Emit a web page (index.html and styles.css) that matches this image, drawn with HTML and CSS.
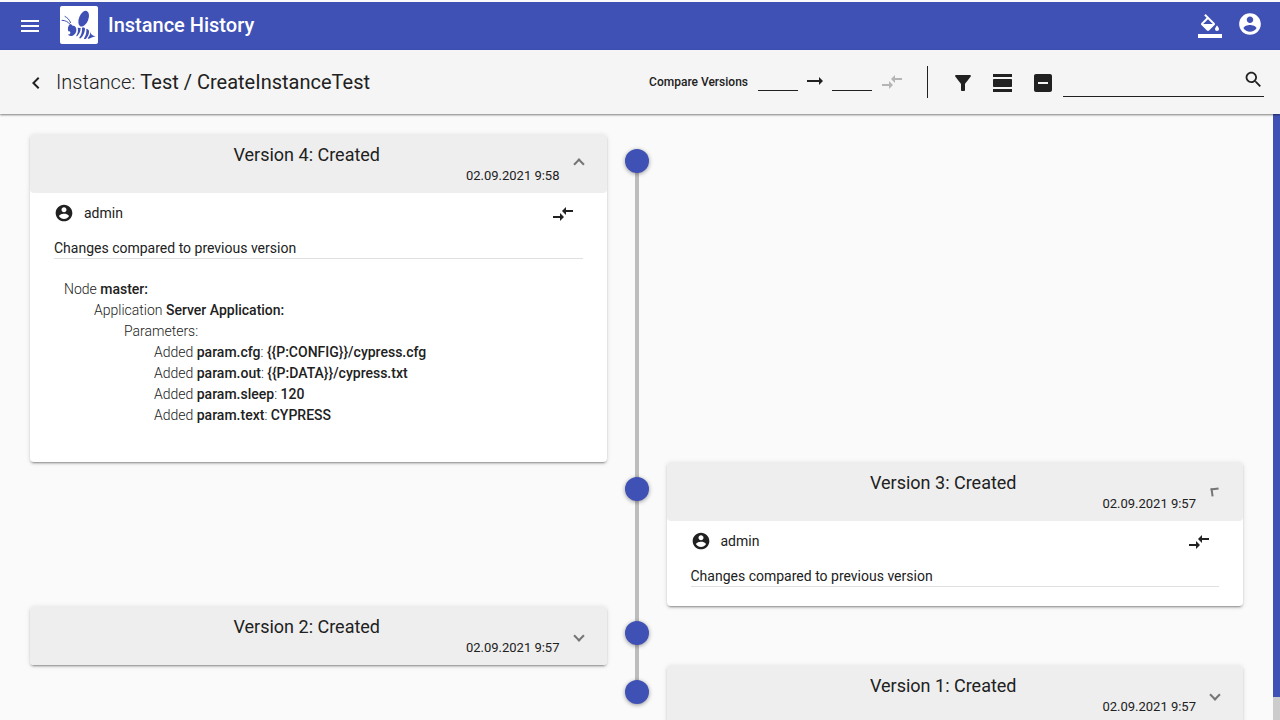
FILE: index.html
```html
<!DOCTYPE html>
<html lang="en">
<head>
<meta charset="utf-8">
<title>Instance History</title>
<link rel="stylesheet" href="styles.css">
</head>
<body>
<svg class="defs" aria-hidden="true">
  <symbol id="account" viewBox="0 0 24 24"><path d="M12 2C6.48 2 2 6.48 2 12s4.48 10 10 10 10-4.48 10-10S17.52 2 12 2zm0 3c1.66 0 3 1.34 3 3s-1.34 3-3 3-3-1.34-3-3 1.34-3 3-3zm0 14.2c-2.5 0-4.71-1.28-6-3.22.03-1.99 4-3.08 6-3.08 1.99 0 5.97 1.09 6 3.08-1.29 1.94-3.5 3.22-6 3.22z"/></symbol>
  <symbol id="compare" viewBox="0 0 24 24"><path d="M9.01 14H2v2h7.01v3L13 15l-3.99-4v3zm5.98-1v-3H22V8h-7.01V5L11 9l3.99 4z"/></symbol>
</svg>

<header class="app-bar">
  <button class="icon-button" aria-label="Menu"><svg class="icon" viewBox="0 0 24 24"><path d="M3 18h18v-2H3v2zm0-5h18v-2H3v2zm0-7v2h18V6H3z"/></svg></button>
  <svg class="logo" viewBox="0 0 114 114" role="img" aria-label="Bee logo">
    <rect class="logo-back" width="114" height="114" rx="6"/>
    <ellipse cx="71" cy="38" rx="14" ry="25" transform="rotate(22 71 38)"/>
    <path d="M30 55c4-1 7 2 8 5 5-2 10 3 11 9 1 9-3 17-11 20-6 2-13 1-14-4 3 1 7-1 7-5 0-3-3-5-6-4-3-7-1-17 5-21z"/>
    <path d="M53 65l9 1c0 9-4 18-10 24-3 2-4 0-2-3 4-7 5-15 3-22z"/>
    <path d="M66 65c5-1 9 0 9 4-1 11-5 21-12 27-3 3-7 1-4-3 5-7 8-17 7-28z"/>
    <path d="M79 68c6 1 9 5 8 11-1 8-4 14-9 19-4 2-8 1-5-3 5-7 7-17 6-27z"/>
    <path d="M91 77c1 8 6 12 16 14-7 1-13 5-20 7-3 0-5-1-3-3 4-5 7-10 7-18z"/>
    <path class="feeler" d="M5 43c11 0 19 4 26 13M14 31c8 4 14 9 18 20"/>
  </svg>
  <h1 class="app-title">Instance History</h1>
  <div class="app-actions">
    <button class="icon-button" aria-label="Theme"><svg class="icon" viewBox="0 0 24 24"><path d="M16.56 8.94L7.62 0 6.21 1.41l2.38 2.38-5.15 5.15c-.59.59-.59 1.54 0 2.12l5.5 5.5c.29.29.68.44 1.06.44s.77-.15 1.06-.44l5.5-5.5c.59-.58.59-1.53 0-2.12zM5.21 10L10 5.21 14.79 10H5.21zM19 11.5s-2 2.17-2 3.5c0 1.1.9 2 2 2s2-.9 2-2c0-1.33-2-3.5-2-3.5zM0 20h24v4H0z"/></svg></button>
    <button class="icon-button account-button" aria-label="Account"><svg class="icon icon-large"><use href="#account"/></svg></button>
  </div>
</header>

<div class="toolbar">
  <button class="icon-button" aria-label="Back"><svg class="icon" viewBox="0 0 24 24"><path d="M15.41 7.41L14 6l-6 6 6 6 1.41-1.41L10.83 12z"/></svg></button>
  <h2 class="page-title">Instance: <span class="page-name">Test / CreateInstanceTest</span></h2>
  <div class="compare-form">
    <span class="compare-label" id="compare-label">Compare Versions</span>
    <input class="version-input" type="text" aria-labelledby="compare-label">
    <svg class="icon" viewBox="0 0 24 24"><path d="M16.01 11H4v2h12.01v3L20 12l-3.99-4z"/></svg>
    <input class="version-input" type="text" aria-labelledby="compare-label">
    <button class="icon-button compare-button" aria-label="Compare" disabled><svg class="icon"><use href="#compare"/></svg></button>
  </div>
  <div class="tools">
    <button class="icon-button" aria-label="Filter"><svg class="icon" viewBox="0 0 24 24"><path d="M4.25 5.61C6.27 8.2 10 13 10 13v6c0 .55.45 1 1 1h2c.55 0 1-.45 1-1v-6s3.72-4.8 5.74-7.39C20.25 4.95 19.78 4 18.95 4H5.04c-.83 0-1.3.95-.79 1.61z"/></svg></button>
    <button class="icon-button" aria-label="Expand all"><svg class="icon" viewBox="0 0 24 24"><path d="M2 21h19v-3H2v3zM20 8H3c-.55 0-1 .45-1 1v6c0 .55.45 1 1 1h17c.55 0 1-.45 1-1V9c0-.55-.45-1-1-1zM2 3v3h19V3H2z"/></svg></button>
    <button class="icon-button" aria-label="Collapse all"><svg class="icon" viewBox="0 0 24 24"><path d="M19 3H5c-1.1 0-2 .9-2 2v14c0 1.1.9 2 2 2h14c1.1 0 2-.9 2-2V5c0-1.1-.9-2-2-2zm-2 10H7v-2h10v2z"/></svg></button>
    <label class="search">
      <input class="search-input" type="text" aria-label="Search">
      <svg class="icon icon-small" viewBox="0 0 24 24"><path d="M15.5 14h-.79l-.28-.27C15.41 12.59 16 11.11 16 9.5 16 5.91 13.09 3 9.5 3S3 5.91 3 9.5 5.91 16 9.5 16c1.61 0 3.09-.59 4.23-1.57l.27.28v.79l5 4.99L20.49 19l-4.99-5zm-6 0C7.01 14 5 11.99 5 9.5S7.01 5 9.5 5 14 7.01 14 9.5 11.99 14 9.5 14z"/></svg>
    </label>
  </div>
</div>

<main class="content">
  <div class="timeline">
    <section class="entry">
      <article class="card">
        <button class="card-header" aria-expanded="true">
          <span class="card-heading"><span class="card-title">Version 4: Created</span><span class="card-date">02.09.2021 9:58</span></span>
          <span class="indicator indicator-open"></span>
        </button>
        <div class="card-body">
          <div class="author"><svg class="icon icon-author"><use href="#account"/></svg><span>admin</span>
            <button class="icon-button author-compare" aria-label="Compare with current"><svg class="icon"><use href="#compare"/></svg></button></div>
          <h3 class="changes-title">Changes compared to previous version</h3>
          <ul class="changes">
            <li>Node <b>master:</b>
              <ul>
                <li>Application <b>Server Application:</b>
                  <ul>
                    <li>Parameters:
                      <ul>
                        <li>Added <b>param.cfg</b>: <b>{{P:CONFIG}}/cypress.cfg</b></li>
                        <li>Added <b>param.out</b>: <b>{{P:DATA}}/cypress.txt</b></li>
                        <li>Added <b>param.sleep</b>: <b>120</b></li>
                        <li>Added <b>param.text</b>: <b>CYPRESS</b></li>
                      </ul>
                    </li>
                  </ul>
                </li>
              </ul>
            </li>
          </ul>
        </div>
      </article>
      <div class="spine"><span class="dot"></span></div>
    </section>

    <section class="entry entry-right">
      <article class="card">
        <button class="card-header" aria-expanded="true">
          <span class="card-heading"><span class="card-title">Version 3: Created</span><span class="card-date">02.09.2021 9:57</span></span>
          <span class="indicator indicator-turning"></span>
        </button>
        <div class="card-body">
          <div class="author"><svg class="icon icon-author"><use href="#account"/></svg><span>admin</span>
            <button class="icon-button author-compare" aria-label="Compare with current"><svg class="icon"><use href="#compare"/></svg></button></div>
          <h3 class="changes-title">Changes compared to previous version</h3>
        </div>
      </article>
      <div class="spine"><span class="dot"></span></div>
    </section>

    <section class="entry">
      <article class="card">
        <button class="card-header" aria-expanded="false">
          <span class="card-heading"><span class="card-title">Version 2: Created</span><span class="card-date">02.09.2021 9:57</span></span>
          <span class="indicator"></span>
        </button>
      </article>
      <div class="spine"><span class="dot"></span></div>
    </section>

    <section class="entry entry-right">
      <article class="card">
        <button class="card-header" aria-expanded="false">
          <span class="card-heading"><span class="card-title">Version 1: Created</span><span class="card-date">02.09.2021 9:57</span></span>
          <span class="indicator"></span>
        </button>
      </article>
      <div class="spine"><span class="dot"></span></div>
    </section>
  </div>
  <div class="scroll-track"><div class="scroll-thumb"></div></div>
</main>
</body>
</html>
```
FILE: styles.css
```css
* { box-sizing: border-box; }

body {
  margin: 0;
  padding-top: 2px;
  height: 100vh;
  display: flex;
  flex-direction: column;
  overflow: hidden;
  background: #fafafa;
  color: #212121;
  font: 14px/20px Roboto, "Liberation Sans", sans-serif;
}

h1, h2, h3, ul { margin: 0; padding: 0; }
h3 { font-weight: 400; }
ul { list-style: none; }
b { font-weight: 500; }
button, input { font: inherit; color: inherit; border: 0; padding: 0; background: none; border-radius: 0; outline: 0; }
.defs { display: none; }

.icon { display: block; width: 24px; height: 24px; fill: currentColor; flex: none; }
.icon-large { width: 26px; height: 26px; }
.icon-small { width: 21px; height: 21px; }
.icon-author { width: 20px; height: 20px; }
.icon-button {
  display: flex;
  align-items: center;
  justify-content: center;
  flex: none;
  width: 40px;
  height: 40px;
}

.app-bar {
  display: flex;
  align-items: center;
  flex: none;
  height: 48px;
  padding: 0 10px;
  background: #3f51b5;
  color: #fff;
}
.logo { width: 38px; height: 38px; margin: 0 10px 2px; fill: #3f51b5; }
.logo-back { fill: #fff; }
.feeler { fill: none; stroke: #3f51b5; stroke-width: 3; }
.app-title { font-size: 20px; font-weight: 500; line-height: 46px; padding-bottom: 2px; }
.app-actions { display: flex; margin-left: auto; }
.account-button { padding-bottom: 4px; }

.toolbar {
  display: flex;
  align-items: center;
  flex: none;
  height: 64px;
  padding: 2px 16px 0;
  background: #f5f5f5;
  box-shadow: 0 1px 2px rgba(0, 0, 0, .5);
  z-index: 1;
}
.page-title { font-size: 20px; font-weight: 300; line-height: 32px; padding-bottom: 2px; }
.page-name { font-weight: 400; }
.compare-form { display: flex; align-items: center; margin-left: auto; padding-bottom: 2px; }
.compare-form > .icon { margin: 0 5px 2px; }
.compare-label { font-size: 12px; font-weight: 500; margin-right: 10px; }
.version-input { width: 40px; height: 18px; border-bottom: 1px solid #212121; }
.compare-button:disabled { color: #b5b5b5; }
.tools {
  display: flex;
  align-items: center;
  height: 32px;
  margin: 0 0 2px 15px;
  padding: 2px 0 0 15px;
  border-left: 1px solid #212121;
}
.search {
  display: flex;
  width: 201px;
  height: 28px;
  border-bottom: 1px solid #212121;
}
.search-input { flex: 1; min-width: 0; }

.content { display: flex; flex: 1; min-height: 0; }
.timeline { flex: 1; min-width: 0; padding: 20px 30px; overflow: hidden; }
.scroll-track { width: 7px; background: #ccc; }
.scroll-thumb { height: 96.2%; background: #3f51b5; }

.entry {
  display: grid;
  grid-template-columns: 1fr 60px 1fr;
}
.entry .card { grid-column: 1; grid-row: 1; }
.entry-right .card { grid-column: 3; }
.spine { grid-column: 2; grid-row: 1; position: relative; padding: 15px 18px 0; }
.spine::before {
  content: "";
  position: absolute;
  left: 28px;
  top: 27px;
  width: 4px;
  height: 100%;
  background: #bdbdbd;
}
.entry:last-child .spine::before { display: none; }
.dot {
  display: block;
  position: relative;
  z-index: 1;
  width: 24px;
  height: 24px;
  border-radius: 50%;
  background: #3f51b5;
  box-shadow: 0 1px 4px rgba(0, 0, 0, .4);
}

.card {
  border-radius: 4px;
  background: #fff;
  box-shadow: 0 3px 1px -2px rgba(0, 0, 0, .2), 0 2px 2px 0 rgba(0, 0, 0, .14), 0 1px 5px 0 rgba(0, 0, 0, .12);
}
.card-header {
  display: flex;
  align-items: center;
  width: 100%;
  height: 59px;
  padding: 0 24px;
  border-radius: 4px;
  background: #eee;
}
.card-heading { flex: 1; display: flex; flex-direction: column; margin-right: 15px; padding-top: 2px; }
.card-title { font-size: 18px; line-height: 22px; text-align: center; }
.card-date { font-size: 13px; line-height: 20px; text-align: right; }
.indicator {
  width: 8px;
  height: 8px;
  border: solid #757575;
  border-width: 0 2px 2px 0;
  transform: rotate(45deg);
}
.indicator-open { transform: rotate(225deg); }
.indicator-turning { transform: rotate(172deg); }

.card-body { padding: 0 24px 19px; }
.author { display: flex; align-items: center; gap: 10px; height: 40px; }
.author-compare { margin-left: auto; padding-top: 2px; }
.changes-title { font-size: 14px; line-height: 20px; padding: 5px 0 0; border-bottom: 1px solid #e0e0e0; }
.changes { padding: 20px 10px 17px; font-weight: 300; line-height: 21px; }
.changes ul { padding-left: 30px; }
```
